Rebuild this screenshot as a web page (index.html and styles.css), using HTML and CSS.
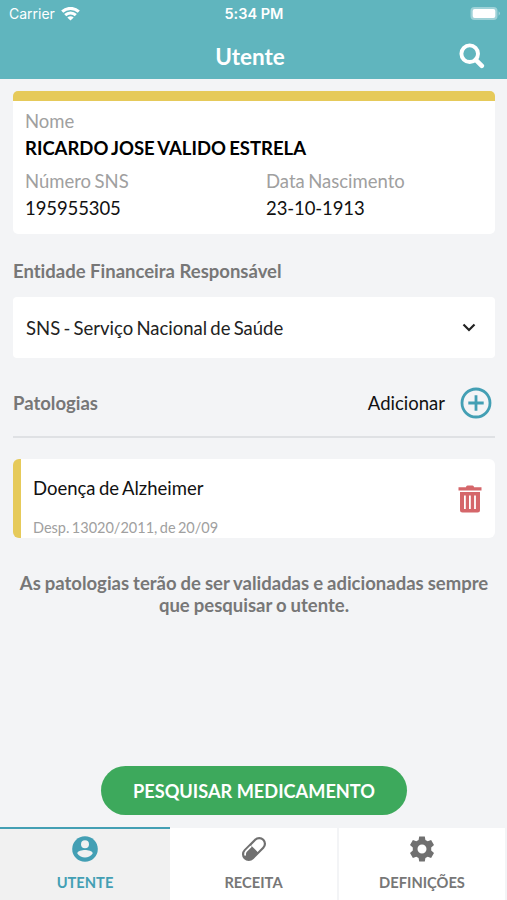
FILE: index.html
```html
<!DOCTYPE html>
<html lang="pt">
<head>
    <meta charset="UTF-8">
    <meta name="viewport" content="width=device-width, initial-scale=1.0">
    <title>Utente</title>
    <link rel="stylesheet" href="styles.css">
</head>
<body>

    <!-- Header -->
    <header class="header">
        <div class="status-bar">
            <div class="carrier">
                <span>Carrier</span>
                <svg width="19" height="14" viewBox="0 0 19 14" fill="none" stroke="#fff" stroke-width="3">
                    <path d="M1.2 4.6C5.8 0.3 13.2 0.3 17.8 4.6"/>
                    <path d="M4.2 8.2C7.2 5.3 11.8 5.3 14.8 8.2"/>
                    <path d="M9.5 13.6L6.3 10.5Q9.5 8 12.7 10.5Z" fill="#fff" stroke="none"/>
                </svg>
            </div>
            <div class="time">5:34 PM</div>
            <div class="battery">
                <svg width="31" height="14" viewBox="0 0 31 14">
                    <rect x="0.5" y="0" width="27" height="13" rx="4" fill="#fff" fill-opacity="0.4"/>
                    <rect x="2.7" y="2" width="22.6" height="9" rx="2" fill="#fff"/>
                    <path d="M28.6 4.3Q31.4 6.5 28.6 8.7Z" fill="#fff" fill-opacity="0.4"/>
                </svg>
            </div>
        </div>
        <div class="title-bar">
            <h1>Utente</h1>
            <svg class="search" width="26" height="26" viewBox="0 0 26 26" fill="none" stroke="#fff">
                <circle cx="10.7" cy="10.7" r="8.3" stroke-width="3.9"/>
                <path d="M16.8 16.8L22.8 22.8" stroke-width="4.6" stroke-linecap="round"/>
            </svg>
        </div>
    </header>

    <main class="content">
        <!-- Patient -->
        <section class="patient">
            <div class="label">Nome</div>
            <div class="name">RICARDO JOSE VALIDO ESTRELA</div>
            <div class="columns">
                <div>
                    <div class="label">Número SNS</div>
                    <div class="value">195955305</div>
                </div>
                <div>
                    <div class="label">Data Nascimento</div>
                    <div class="value">23-10-1913</div>
                </div>
            </div>
        </section>

        <h2>Entidade Financeira Responsável</h2>
        <div class="select">
            <span>SNS - Serviço Nacional de Saúde</span>
            <svg width="14" height="9" viewBox="0 0 14 9" fill="none" stroke="#222" stroke-width="2.2">
                <path d="M1.5 1.5L7 7L12.5 1.5"/>
            </svg>
        </div>

        <!-- Pathologies -->
        <div class="section-head">
            <h2>Patologias</h2>
            <div class="add">
                <span>Adicionar</span>
                <svg width="32" height="32" viewBox="0 0 32 32" fill="none" stroke="#439fb4" stroke-width="2.8">
                    <circle cx="16" cy="16" r="14"/>
                    <path d="M16 8.3V23.7M8.3 16H23.7"/>
                </svg>
            </div>
        </div>

        <div class="pathology">
            <div>
                <div class="pathology-name">Doença de Alzheimer</div>
                <div class="dispatch">Desp. 13020/2011, de 20/09</div>
            </div>
            <svg width="24" height="28" viewBox="0 0 24 28" fill="#d5666a">
                <path d="M0.5 2.3H8Q8 0.5 9.5 0.5H14.5Q16 0.5 16 2.3H23.5V5.4H0.5Z"/>
                <path fill-rule="evenodd" d="M2 7H22V25Q22 27.5 19.5 27.5H4.5Q2 27.5 2 25ZM6 10.5V24H7.8V10.5ZM11 10.5V24H12.8V10.5ZM16.1 10.5V24H17.9V10.5Z"/>
            </svg>
        </div>

        <p class="note">As patologias terão de ser validadas e adicionadas sempre que pesquisar o utente.</p>

        <button class="search-button">PESQUISAR MEDICAMENTO</button>
    </main>

    <!-- Tabs -->
    <nav class="tabs">
        <div class="tab active">
            <svg width="26" height="26" viewBox="0 0 26 26">
                <circle cx="13" cy="13" r="12.8" fill="#439fb4"/>
                <circle cx="13" cy="8.2" r="4" fill="#f1f1f1"/>
                <path d="M5.3 17.4C5.3 14.8 10.2 14 13 14S20.7 14.8 20.7 17.4C17 22.7 9 22.7 5.3 17.4Z" fill="#f1f1f1"/>
            </svg>
            <span>UTENTE</span>
        </div>
        <div class="tab">
            <svg width="26" height="26" viewBox="0 0 26 26">
                <g transform="rotate(-45 13 13)">
                    <rect x="-1.2" y="6.2" width="28.4" height="13.6" rx="6.8" fill="#707070"/>
                    <path d="M13.5 8.4H20.4A4.6 4.6 0 0 1 20.4 17.6H13.5Z" fill="#fff"/>
                    <path d="M2.6 10.8Q4 9 6 9H12.4" fill="none" stroke="#fff" stroke-width="1.8" stroke-linecap="round"/>
                </g>
            </svg>
            <span>RECEITA</span>
        </div>
        <div class="tab">
            <svg width="26" height="26" viewBox="0 0 26 26" fill="#707070">
                <path fill-rule="evenodd" d="M10.2 0.5H15.8L16.4 4L18.7 5.3L22.1 4L25 9L22.2 11.5V14.5L25 17L22.1 22L18.7 20.7L16.4 22L15.8 25.5H10.2L9.6 22L7.3 20.7L3.9 22L1 17L3.8 14.5V11.5L1 9L3.9 4L7.3 5.3L9.6 4ZM13 8.5A4.5 4.5 0 1 0 13 17.5A4.5 4.5 0 1 0 13 8.5Z"/>
            </svg>
            <span>DEFINIÇÕES</span>
        </div>
    </nav>

</body>
</html>
```
FILE: styles.css
```css
* {
    box-sizing: border-box;
}
body {
    margin: 0;
    height: 900px;
    display: flex;
    flex-direction: column;
    font-family: Lato, sans-serif;
    font-size: 18.5px;
    font-variant-ligatures: none;
    word-spacing: -1.3px;
    background-color: #f3f4f6;
    color: #111;
    overflow: hidden;
}
svg {
    display: block;
    flex-shrink: 0;
}
h1, h2, p {
    margin: 0;
}
.header {
    height: 79px;
    background-color: #60b5be;
    color: white;
}
.status-bar {
    display: grid;
    grid-template-columns: 1fr auto 1fr;
    align-items: center;
    height: 27px;
    padding: 0 6px 0 9px;
    font-family: Inter, sans-serif;
    font-size: 14px;
    word-spacing: 0;
}
.carrier {
    display: flex;
    align-items: center;
    gap: 6px;
}
.time {
    margin-right: 2px;
    font-size: 14.5px;
    font-weight: 600;
}
.battery {
    justify-self: end;
}
.title-bar {
    display: grid;
    grid-template-columns: 1fr auto 1fr;
    align-items: center;
    height: 58px;
    padding: 0 22px 0 15px;
}
h1 {
    grid-column: 2;
    padding-top: 1px;
    font-size: 22.5px;
    line-height: 28px;
}
.search {
    justify-self: end;
}
.content {
    flex: 1;
    display: flex;
    flex-direction: column;
    padding: 12px 12px 12px 13px;
}
.patient {
    height: 143px;
    padding: 7px 12px;
    background-color: white;
    border-top: 10px solid #e6ca5a;
    border-radius: 5px;
    line-height: 27px;
}
.label {
    color: #a0a0a0;
}
.name {
    font-weight: 700;
    color: #000;
}
.value {
    letter-spacing: -0.1px;
}
.columns {
    display: grid;
    grid-template-columns: 241px 1fr;
    margin-top: 6px;
}
h2 {
    font-size: 18.5px;
    line-height: 22px;
    word-spacing: 0;
    color: #777;
}
.patient + h2 {
    margin-top: 26px;
}
.select {
    display: flex;
    align-items: center;
    justify-content: space-between;
    height: 61px;
    margin-top: 15px;
    padding: 0 19px 0 13px;
    background-color: white;
    border-radius: 4px;
    color: #222;
    word-spacing: -1.5px;
}
.section-head {
    display: flex;
    align-items: center;
    justify-content: space-between;
    height: 68px;
    margin-top: 12px;
    padding: 0 3px 0 0;
    border-bottom: 2px solid #dfe1e4;
}
.add {
    display: flex;
    align-items: center;
    gap: 15px;
}
.pathology {
    display: flex;
    align-items: center;
    justify-content: space-between;
    height: 79px;
    margin-top: 21px;
    padding: 0 13px 0 12px;
    background-color: white;
    border-left: 8px solid #e6ca5a;
    border-radius: 6px;
}
.pathology-name {
    padding-top: 16px;
    line-height: 24px;
}
.dispatch {
    margin-top: 18px;
    font-size: 14.5px;
    line-height: 20px;
    color: #a0a0a0;
}
.note {
    margin-top: 34px;
    font-weight: 700;
    line-height: 22px;
    text-align: center;
    word-spacing: -0.5px;
    color: #777;
}
.search-button {
    align-self: center;
    width: 306px;
    height: 49px;
    margin-top: auto;
    border: none;
    border-radius: 25px;
    background-color: #3da95c;
    color: white;
    font-family: inherit;
    font-size: 18.2px;
    font-weight: 700;
}
.tabs {
    display: grid;
    grid-template-columns: 170px 169px 168px;
    height: 73px;
}
.tab {
    display: flex;
    flex-direction: column;
    align-items: center;
    gap: 11px;
    padding-top: 8px;
    background-color: white;
    border-top: 1px solid #f3f4f6;
    border-right: 2px solid #f3f4f6;
    color: #777;
    font-size: 14.7px;
    font-weight: 700;
    line-height: 18px;
}
.active {
    padding-top: 7px;
    background-color: #f1f1f1;
    border-top: 2px solid #439fb4;
    border-right: none;
    color: #439fb4;
}
```
